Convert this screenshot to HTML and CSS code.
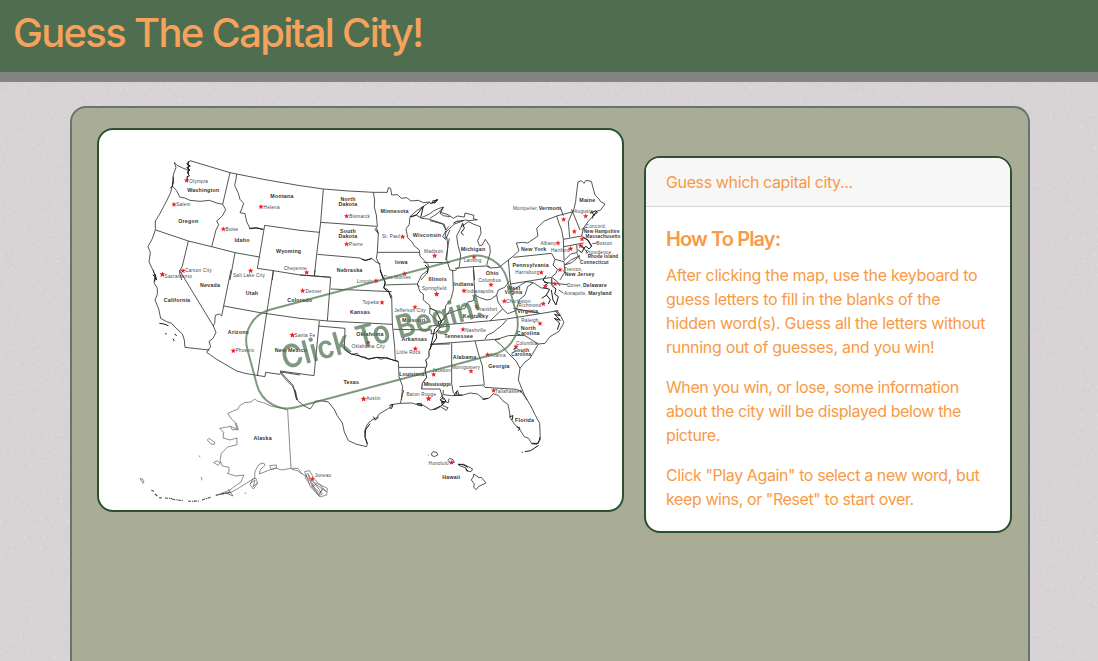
FILE: index.html
```html
<!DOCTYPE html>
<html lang="en">
<head>
<meta charset="utf-8">
<title>Guess The Capital City!</title>
<link rel="stylesheet" href="styles.css">
</head>
<body>
<svg class="paper" aria-hidden="true"><filter id="grain" x="0" y="0" width="100%" height="100%"><feTurbulence type="fractalNoise" baseFrequency=".3" numOctaves="4" seed="8"/><feColorMatrix values="0 0 0 0 1  0 0 0 0 1  0 0 0 0 1  3 0 0 0 -1.85"/></filter><rect width="100%" height="100%" filter="url(#grain)"/></svg>
<header class="banner"><h1>Guess The Capital City!</h1></header>
<main class="board">
<section class="map-card">
<svg class="map" viewBox="99 130 523 380" role="img" aria-label="Map of US capitals">
<defs><path id="s" class="star" d="M0-8L2-2.5 8-2.500 3.500 1.500 5 7.500 0 4-5 7.500-3.500 1.500-8-2.500-2-2.500z"/></defs>
<!-- Northwest -->
<g transform="translate(130 150) scale(.33333)">
<path d="M133 37L141 46 158 54 168 58 175 62M133 37L138 53 132 68 129 80 131 96 127 108 140 122 149 141 164 144 180 151 210 154 238 151 260 159 278 163M180 32L300 68 320 72 400 88 510 107M300 68L278 163 287 179 277 198 260 213 266 224 258 240 245 290M127 108L121 130 104 164 88 194 76 213 76 240 67 266 54 290 61 307 57 336 70 363 76 378 78 390M77 240L175 273 245 290 315 308 388 321M175 273L157 348 148 365 155 390M320 72L318 88 314 106 325 130 330 148 341 160 336 175 330 188 345 191 350 215 360 235 380 233 400 239M510 241L404 226 388 321 382 355 430 362 510 375M315 308L300 390M430 362L427 390"/>
<path class="rough" d="M180 32L170 42 181 48 170 53 180 60 172 66 178 78 171 80 173 92M175 34v38M130 80L127 108 121 115M358 236l20-2 22 4M75 372l5 18"/>
<use href="#s" x="170" y="91"/><use href="#s" x="132" y="163"/><use href="#s" x="393" y="170"/><use href="#s" x="280" y="237"/><use href="#s" x="97" y="373"/><use href="#s" x="159" y="362"/><use href="#s" x="362" y="362"/>
<g class="state"><text x="220" y="126">Washington</text><text x="175" y="218">Oregon</text><text x="336" y="275">Idaho</text><text x="456" y="143">Montana</text><text x="476" y="308">Wyoming</text></g>
<g class="city"><text x="206" y="98">Olympia</text><text x="160" y="169">Salem</text><text x="425" y="176">Helena</text><text x="306" y="243">Boise</text><text x="205" y="366">Carson City</text><text x="145" y="385">Sacramento</text><text x="357" y="381">Salt Lake City</text></g>
</g>
<!-- Southwest -->
<g transform="translate(130 270) scale(.33333)">
<path d="M70 0L75 20 72 38 82 55 82 73 75 90 86 117 92 145 110 155 125 160 141 177 157 192 163 210 165 232 200 236 238 240M148 0L250 168 258 188 249 205 237 214 242 230 230 247 260 268 320 303 345 310 405 320 407 307 450 313 453 306 510 315M303 0L281 108 275 138 268 132 256 136 254 160 250 168M281 108L390 128 510 145M430 2L410 130 382 318M453 310L465 326 487 348 497 365 502 390"/>
<path class="rough" d="M68 15l8 5-2 15M88 160l14 2 13 5M105 191l5 1M134 191l6 7M129 206l4 7"/>
<use href="#s" x="97" y="13"/><use href="#s" x="310" y="242"/><use href="#s" x="487" y="195"/>
<g class="state"><text x="240" y="50">Nevada</text><text x="366" y="74">Utah</text><text x="141" y="97">California</text><text x="325" y="191">Arizona</text></g>
<g class="city"><text x="345" y="247">Phoenix</text></g>
</g>
<!-- North central -->
<g transform="translate(280 150) scale(.33333)">
<path d="M60 107L130 117 205 123 280 127 322 127 325 113 332 115 335 135 352 134 365 145 380 143 393 153 415 151 430 158 450 156 430 169 410 182 390 200M130 117L122 217 110 313 103 378M60 241L118 247M122 217L290 229M112 313L240 324 255 332 275 325 288 336 302 342M280 127L284 150 283 172 289 195 292 229 285 239 295 250 292 307 418 307M292 307L289 325 299 345 302 363 310 390M390 200L388 223 378 237 383 263 397 277 402 287 418 300 420 318 445 345 442 368 423 390M430 337L510 338M390 200L410 196 425 205 444 207 468 214 493 223 498 242 488 260 497 268 510 240M425 203L448 192 462 182 475 176 490 171 480 190 490 197 510 200M60 375L103 378 152 382M500 260L504 290 497 330"/>
<path class="rough" d="M455 157l10 2 8-10-8 4M393 201l17-7 20-25-8 34M290 236l5 15M245 327l12 4 18-5M435 345l10 10-3 15"/>
<use href="#s" x="200" y="198"/><use href="#s" x="200" y="282"/><use href="#s" x="368" y="260"/><use href="#s" x="464" y="317"/><use href="#s" x="374" y="371"/><use href="#s" x="80" y="367"/>
<g class="state"><text x="204" y="153">North</text><text x="204" y="168">Dakota</text><text x="204" y="249">South</text><text x="204" y="264">Dakota</text><text x="344" y="188">Minnesota</text><text x="441" y="261">Wisconsin</text><text x="364" y="341">Iowa</text><text x="209" y="366">Nebraska</text></g>
<g class="city"><text x="239" y="204">Bismarck</text><text x="228" y="288">Pierre</text><text x="333" y="265">St. Paul</text><text x="461" y="309">Madison</text><text x="46" y="361">Cheyenne</text><text x="352" y="388">Des Moines</text></g>
</g>
<!-- South central -->
<g transform="translate(280 270) scale(.33333)">
<path d="M152 57L335 65M60 15L103 18 152 22 142 153M103 18L105 0M300 0L315 35 312 55 322 58 335 78 337 163 344 230 346 272M60 145L142 153 337 163M118 153L102 317 0 303M115 168L195 175 193 238 215 253 232 250 240 260 258 262 265 268 290 262 303 268 320 262 340 271 355 275 357 320 368 350 364 390M312 45L410 42 419 51M445 0L425 15 412 42 420 65 430 72 430 90 450 107 449 130 463 145 475 155 490 150 510 120M340 178L455 180 453 192 465 190M455 223L510 222M478 172L510 168M357 292L435 292M0 303L15 320 39 346 50 390M425 357L480 357 490 390"/>
<path class="rough" d="M300 0L308 20 316 38 311 54 327 67 333 85M475 155L480 172 468 187 470 204 457 223 447 242 447 260 437 270 441 284 435 300 440 322 427 340 425 357M194 238l20 14 25 6 25 9 28-5 25 2 38 10"/>
<use href="#s" x="68" y="62"/><use href="#s" x="288" y="32"/><use href="#s" x="306" y="97"/><use href="#s" x="405" y="111"/><use href="#s" x="470" y="72"/><use href="#s" x="37" y="195"/><use href="#s" x="264" y="218"/><use href="#s" x="406" y="236"/><use href="#s" x="461" y="313"/><use href="#s" x="251" y="386"/><use href="#s" x="446" y="385"/>
<g class="state"><text x="59" y="97">Colorado</text><text x="240" y="131">Kansas</text><text x="401" y="156">Missouri</text><text x="473" y="34">Illinois</text><text x="270" y="197">Oklahoma</text><text x="403" y="212">Arkansas</text><text x="33" y="247">New Mexico</text><text x="214" y="341">Texas</text><text x="396" y="317" textLength="76">Louisiana</text><text x="472" y="347" textLength="82">Mississippi</text></g>
<g class="city"><text x="101" y="69">Denver</text><text x="255" y="38">Lincoln</text><text x="272" y="102">Topeka</text><text x="390" y="126">Jefferson City</text><text x="463" y="61">Springfield</text><text x="75" y="200">Santa Fe</text><text x="265" y="234">Oklahoma City</text><text x="386" y="253">Little Rock</text><text x="485" y="305">Jackson</text><text x="280" y="391">Austin</text><text x="424" y="377">Baton Rouge</text></g>
</g>
<!-- Northeast -->
<g transform="translate(430 150) scale(.33333)">
<path d="M0 205L23 190 40 172 32 187 54 194 70 205 82 198 103 201 105 189 132 196 130 207 142 209 119 212 104 210 91 216 73 222 65 230 48 246 45 265M0 212L38 222 48 240 57 229M58 265L53 290 50 330 60 360 75 362 88 350 92 315 84 286 80 258 94 230 115 215 132 223 151 230 153 250 143 272 148 287 157 285 166 268 179 287 181 306 170 345M75 355L130 350 170 348 181 354 207 352 235 330 250 318 267 302 259 279 277 277 293 279 324 258 320 235 343 213 380 198 430 185 437 154 439 135 444 96 454 92 462 100 468 91 484 94 495 135 507 147 511 154 525 162 511 181 499 184 490 198 477 211 460 235 455 258 474 272 484 289M425 178L450 240M430 180L415 215 419 262M380 198L387 220 395 240 400 268 402 330M400 268L455 258M402 290L461 279M440 285L442 307 422 312 402 332M404 345L424 329 450 317 425 338 404 345M235 330L240 390M250 322L365 310 375 328 369 345 382 358 378 370 365 381M375 328L402 335 405 365 390 390M130 350L134 390M392 175l8 22M455 238l15-6M487 281l14-2M455 286l18 23M441 310l10 20M398 360l8 9"/>
<path class="rough" d="M0 160l8-1 15-10-17 5M70 220l10-6 20-2M94 230l4-10 5 15-10 13 8 7M480 190l18-8 4 6-12 7-3 10M485 184l8 14M460 262l14 8 11 18-8 9-9-8-7 6-10-12M445 300l10 8 8-15M173 346l7 7"/>
<use href="#s" x="401" y="208"/><use href="#s" x="467" y="198"/><use href="#s" x="433" y="244"/><use href="#s" x="456" y="267"/><use href="#s" x="384" y="279"/><use href="#s" x="422" y="296"/><use href="#s" x="452" y="287"/><use href="#s" x="132" y="321"/><use href="#s" x="390" y="359"/><use href="#s" x="334" y="367"/>
<g class="state"><text x="472" y="157">Maine</text><text x="360" y="181">Vermont</text><text x="129" y="303">Michigan</text><text x="311" y="303">New York</text><text x="515" y="248" textLength="108" lengthAdjust="spacingAndGlyphs">New Hampshire</text><text x="519" y="265" textLength="105" lengthAdjust="spacingAndGlyphs">Massachusetts</text><text x="519" y="325" textLength="92" lengthAdjust="spacingAndGlyphs">Rhode Island</text><text x="493" y="342" textLength="86" lengthAdjust="spacingAndGlyphs">Connecticut</text><text x="302" y="351">Pennsylvania</text><text x="449" y="379" textLength="90" lengthAdjust="spacingAndGlyphs">New Jersey</text><text x="187" y="375">Ohio</text></g>
<g class="city"><text x="287" y="181">Montpelier,</text><text x="461" y="188">Augusta</text><text x="498" y="234">Concord,</text><text x="523" y="284">Boston</text><text x="355" y="284">Albany</text><text x="391" y="306">Hartford</text><text x="508" y="312">Providence,</text><text x="128" y="337">Lansing</text><text x="292" y="372">Harrisburg</text><text x="430" y="363">Trenton,</text></g>
</g>
<!-- Southeast -->
<g transform="translate(430 270) scale(.33333)">
<path d="M240 30L242 42 365 22 382 35 390 48M0 168L175 153 230 147 385 122M0 223L210 207M230 150L215 167 200 178 190 187 172 195 165 208M195 210L235 197 257 196 285 197 325 222M195 210L215 227 235 250 258 273 270 295M135 213L148 260 157 288 159 310 163 345M88 350L160 345 165 352 260 358 275 365M65 220L65 340 70 370M68 0L70 60 62 90 47 108 45 125M130 0L135 75M30 160L48 133 70 125 84 120 105 115 114 96 130 92 135 75 149 83 170 90 182 88 200 75 205 60 224 52 239 33M200 75L204 96 218 117 206 128 180 153M218 117L233 131 258 122 268 89 285 75 293 50 310 38M242 42L244 65 262 52 278 41 290 35 310 38 334 54 350 55M380 120L393 139 402 158 387 184 360 200 345 220 325 222 300 265 284 277 270 295 265 330 279 365 290 390M342 37L413 44M386 60L400 69M250 115l80 15"/>
<path class="rough" d="M348 17l-9 14 14 9-12 13 18 5-10 17 12 14-6 13M365 25l1 22 12 10-4 15 11 8-7 25-9-15-5-30M375 122l15 15-16-4 17 18-18-6 16 14-7 20M335 85l15-10M0 115l18 7 17 35-21 20-14 62"/>
<use href="#s" x="183" y="44"/><use href="#s" x="102" y="62"/><use href="#s" x="20" y="72"/><use href="#s" x="223" y="93"/><use href="#s" x="340" y="101"/><use href="#s" x="375" y="41"/><use href="#s" x="346" y="48"/><use href="#s" x="140" y="109"/><use href="#s" x="330" y="160"/><use href="#s" x="99" y="178"/><use href="#s" x="258" y="230"/><use href="#s" x="173" y="254"/><use href="#s" x="123" y="303"/><use href="#s" x="191" y="361"/>
<g class="state"><text x="100" y="48">Indiana</text><text x="251" y="60">West</text><text x="251" y="73" textLength="53" lengthAdjust="spacingAndGlyphs">Virginia</text><text x="293" y="129">Virginia</text><text x="137" y="145">Kentucky</text><text x="86" y="205">Tennessee</text><text x="295" y="179">North</text><text x="295" y="194">Carolina</text><text x="274" y="245">South</text><text x="274" y="259" textLength="60" lengthAdjust="spacingAndGlyphs">Carolina</text><text x="104" y="266">Alabama</text><text x="207" y="295">Georgia</text><text x="495" y="50" textLength="72" lengthAdjust="spacingAndGlyphs">Delaware</text><text x="510" y="76" textLength="71" lengthAdjust="spacingAndGlyphs">Maryland</text></g>
<g class="city"><text x="179" y="35">Columbus</text><text x="150" y="68">Indianapolis</text><text x="265" y="99">Charleston</text><text x="300" y="111">Richmond</text><text x="434" y="50">Dover,</text><text x="436" y="75" textLength="68">Annapolis,</text><text x="171" y="124">Frankfort</text><text x="300" y="157">Raleigh</text><text x="137" y="185">Nashville</text><text x="290" y="225">Columbia</text><text x="203" y="260">Atlanta</text><text x="108" y="297">Montgomery</text><text x="236" y="370">Tallahassee</text></g>
</g>
<!-- Alaska and south Texas -->
<g transform="translate(130 390) scale(.33333)">
<path d="M495 0L497 18 503 32 523 48 540 57 548 47 555 34 572 32 595 36 614 60 621 76 637 99 643 126 655 152"/>
<path class="thin" d="M473 60L450 53 425 49 400 38 384 34 374 27 363 36 344 38 329 47 324 57 293 70 305 88 319 100 325 119 306 119 302 109 269 115 281 127 279 144 300 150 321 144 321 164 293 171 274 190 270 211 277 228 297 232 297 246 292 250 317 258 342 255 332 277 311 291 300 300 259 316M473 60L483 235 455 240 437 234 421 239 388 252 391 239 405 226 401 219 387 223 375 244 374 264 350 279 325 295 299 309 268 313M483 235L504 235 514 250 530 259 541 290 570 321 590 315 592 295 570 284 552 266 539 242 524 245 530 262M232 150l5-5 18 13-3 6-10-3zM251 218l8-5 12 5-6 8zM360 284l8-17 10-2 5 15-13 17zM30 266l8 1 4 9-3 4zM206 197l5 4M214 261l2 10M344 309l5 1"/>
<path class="rough dashed" d="M64 301l8 3M75 312l9 8M87 323l10 1M105 324l22 2M127 328l32 4M174 334l33-1M216 330l28-9M257 316l45-10"/>
<path class="rough thin" d="M302 109l20 9-7-19M419 227l20-2 0 9-15 5zM528 258l26 30-10 1 25 28 8-5-23-31 35 24-20-21-20-8-16-26-8 13 15 20M535 255l10 30 25 25 8-14-12 20-20-34M361 280l14-10-5 20 12-12M285 308l24 10-14-21M485 238l17 4 14 10"/>
<use href="#s" x="547" y="267"/>
<text class="state" x="398" y="149">Alaska</text><text class="city" x="579" y="260">Juneau</text>
</g>
<!-- Gulf coast, Florida and Hawaii -->
<g transform="translate(340 390) scale(.33333)">
<path d="M25 152L50 163 80 170 82 160 75 140 74 122 81 105 91 93 111 82 118 72 146 55 160 43 181 40 191 0M181 40L215 39 235 45 249 45 272 60 290 57 301 50 319 61 324 53 308 47 305 33 325 38 327 26M301 23L310 14 335 17 366 16 390 9 412 12 433 28 448 24 460 11 475 16 488 32 504 43 509 68 510 82 523 102 539 118 553 140 566 145 575 161 590 163 601 149 599 100 586 76 574 51 559 25 540 0M310 0l-1 15M352 0l5 15M275 190l4-5 11 2 3 8-10 5-8-4zM265 195h2M324 211l5-6 10 4 4 8-12 3zM354 223h17l12 6 15 8-5 8-13-2-3-10-15-4zM401 252l16 11 7-1 14 17-23 11-6 9-8-7 2-10-9-12 7-12z"/>
<path class="rough" d="M82 162l-7-20 2-23 13-18M100 80l6 10 10-9M148 46l11-3-4 12-7-1M230 41l14 0 2 7-14-4M279 59l23-11 12-10-14-8 10-8 8 12-15 5M427 28l17-3M509 80l10-3-3 13M530 110l10 4-5 8M575 160l20 0 5-18M545 186l3 1M555 185l17-3 24-16M350 12v-8l-8 11h25M354 223l18 2 12 7M376 235l8 8"/>
<use href="#s" x="71" y="27"/><use href="#s" x="266" y="26"/><use href="#s" x="335" y="217"/>
<g class="state"><text x="554" y="95">Florida</text><text x="334" y="267">Hawaii</text></g><text class="city" x="296" y="226">Honolulu</text>
</g>
<g class="begin" transform="translate(382 332) rotate(-15)"><rect x="-134.500" y="-50.500" width="269" height="101" rx="32"/><text x="0" y="11" textLength="207" lengthAdjust="spacingAndGlyphs">Click To Begin!</text></g>
</svg>
</section>
<aside class="info">
<p class="prompt">Guess which capital city...</p>
<div class="rules">
<h2>How To Play:</h2>
<p class="keys">After clicking the map, use the keyboard to<br>guess letters to fill in the blanks of the<br>hidden word(s). Guess all the letters without<br>running out of guesses, and you win!</p>
<p>When you win, or lose, some information<br>about the city will be displayed below the<br>picture.</p>
<p>Click "Play Again" to select a new word, but<br>keep wins, or "Reset" to start over.</p>
</div>
</aside>
</main>
</body>
</html>
```
FILE: styles.css
```css
* { box-sizing: border-box; }
body { margin: 0; height: 661px; overflow: hidden; background: #d7d3d4; font: 16px/24px Inter, sans-serif; color: #f89a46; }
.paper { position: absolute; inset: 0; z-index: -1; width: 100%; height: 100%; opacity: .3; }
.banner { height: 82px; padding: 9px 13px; background: #4f6e50; border-bottom: 10px solid #838584; }
h1 { margin: 0; font-size: 40px; line-height: 48px; font-weight: 550; letter-spacing: -1.7px; color: #f5a35c; white-space: nowrap; }
.board { display: flex; align-items: flex-start; gap: 20px; width: 960px; height: 555px; margin: 24px 0 0 70px; padding: 20px 16px 0 25px; background: #aaad96; border: 2px solid #6c7273; border-bottom: 0; border-radius: 16px 16px 0 0; }
.map-card { flex: none; width: 527px; height: 384px; border: 2px solid #2b5130; border-radius: 16px; background: #fff; overflow: hidden; }
.map { display: block; width: 523px; height: 380px; }
.map path { fill: none; stroke: #333; stroke-width: 2.5; stroke-linejoin: round; }
.map .rough { stroke: #1a1a1a; stroke-width: 3; }
.map .thin { stroke: #555; stroke-width: 2; }
.map .rough.dashed { stroke: #444; stroke-width: 3.2; stroke-dasharray: 9 3 4 2; }
.map .star { fill: #f02025; stroke: none; }
.state, .city { font-family: "Liberation Sans", Arial, sans-serif; text-anchor: middle; }
.state { font-size: 16px; font-weight: 700; letter-spacing: .6px; fill: #333; }
.city { font-size: 14px; letter-spacing: .7px; fill: #444; }
.begin { opacity: .72; }
.begin rect { fill: none; stroke: #4f7350; stroke-width: 2; }
.begin text { font: 600 32px Inter, sans-serif; text-anchor: middle; fill: #4f7350; }
.info { flex: none; width: 368px; height: 377px; margin-top: 28px; border: 2px solid #2b5130; border-radius: 16px; background: #fff; overflow: hidden; white-space: nowrap; letter-spacing: -.4px; }
.prompt { margin: 0; height: 49px; padding: 12px 20px; background: #f7f7f7; border-bottom: 1px solid #d8d8d8; letter-spacing: -.38px; }
.rules { padding: 20px; }
h2 { margin: 0 0 12px; font-size: 20px; line-height: 24px; font-weight: 600; letter-spacing: -.9px; }
.rules p { margin: 0 0 16px; }
.rules .keys { letter-spacing: -.3px; }
```
